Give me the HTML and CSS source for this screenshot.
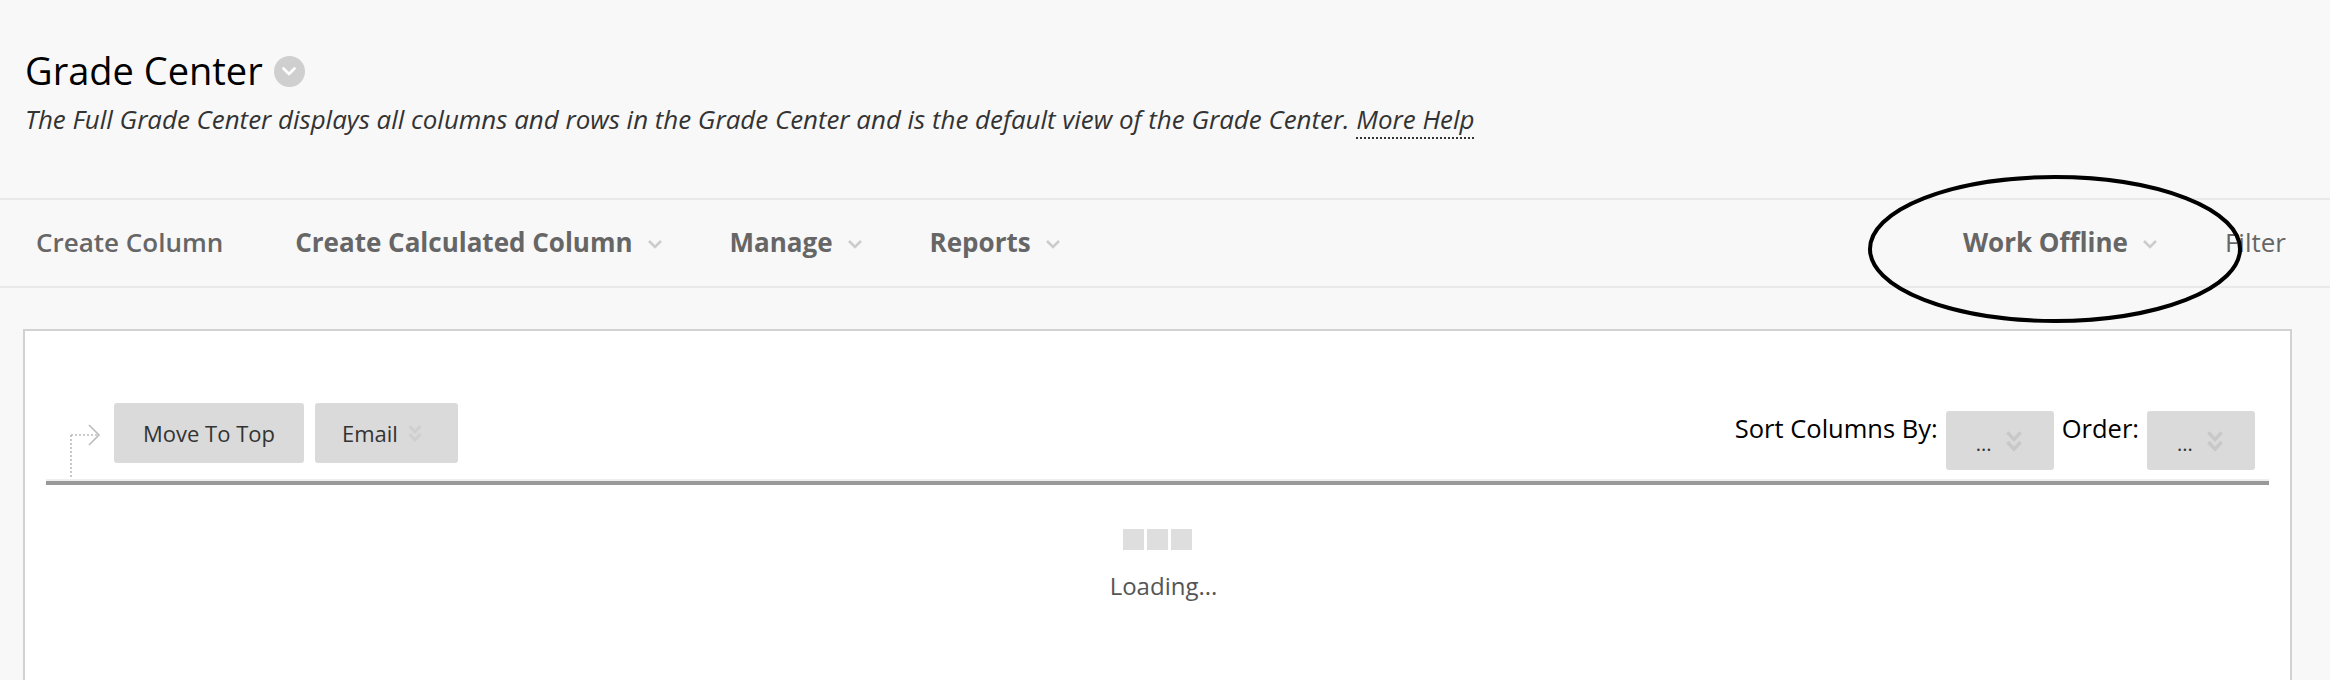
FILE: index.html
```html
<!DOCTYPE html>
<html lang="en">
<head>
<meta charset="utf-8">
<title>Grade Center</title>
<link rel="stylesheet" href="styles.css">
</head>
<body>
<header class="page-header">
  <div class="title-row">
    <h1 class="title">Grade Center</h1>
    <span class="title-menu">
      <svg width="14" height="9" viewBox="0 0 14 9"><polyline points="1.5,1.5 7,7 12.5,1.5" fill="none" stroke="#fff" stroke-width="2.6" stroke-linecap="round" stroke-linejoin="round"/></svg>
    </span>
  </div>
  <p class="desc">The Full Grade Center displays all columns and rows in the Grade Center and is the default view of the Grade Center. <a class="help" href="#">More Help</a></p>
</header>

<nav class="actionbar">
  <div class="nav-left">
    <span class="nav-item semi">Create Column</span>
    <span class="nav-item">Create Calculated Column<svg class="chev" viewBox="0 0 16 10"><polyline points="2,2 8,8 14,2" fill="none" stroke="#ccc" stroke-width="2.6"/></svg></span>
    <span class="nav-item">Manage<svg class="chev" viewBox="0 0 16 10"><polyline points="2,2 8,8 14,2" fill="none" stroke="#ccc" stroke-width="2.6"/></svg></span>
    <span class="nav-item">Reports<svg class="chev" viewBox="0 0 16 10"><polyline points="2,2 8,8 14,2" fill="none" stroke="#ccc" stroke-width="2.6"/></svg></span>
  </div>
  <div class="nav-right">
    <span class="nav-item">Work Offline<svg class="chev" viewBox="0 0 16 10"><polyline points="2,2 8,8 14,2" fill="none" stroke="#ccc" stroke-width="2.6"/></svg></span>
    <span class="nav-item plain">Filter</span>
  </div>
  <svg class="annotation" width="378" height="152" viewBox="0 0 378 152"><ellipse cx="189" cy="76" rx="185" ry="72" fill="none" stroke="#000" stroke-width="4"/></svg>
</nav>

<main class="content">
  <div class="toolbar">
    <div class="tool-left">
      <svg class="move-arrow" width="36" height="54" viewBox="0 0 36 54">
        <line x1="5" y1="11" x2="5" y2="54" stroke="#bbb" stroke-width="1.6" stroke-dasharray="2 2"/>
        <line x1="5" y1="11" x2="32" y2="11" stroke="#bbb" stroke-width="1.6" stroke-dasharray="2 2"/>
        <polyline points="23,1 33,11 23,21" fill="none" stroke="#bbb" stroke-width="1.6"/>
      </svg>
      <button class="btn">Move To Top</button>
      <button class="btn btn-menu">Email<svg class="dbl" viewBox="0 0 14 20"><polyline points="1.5,2 7,8 12.5,2" fill="none" stroke="#cfcfcf" stroke-width="3"/><polyline points="1.5,10 7,16 12.5,10" fill="none" stroke="#cfcfcf" stroke-width="3"/></svg></button>
    </div>
    <div class="tool-right">
      <span class="sort-label">Sort Columns By:</span>
      <span class="select"><span class="dots">...</span><svg class="dbl" viewBox="0 0 14 20"><polyline points="1.5,2 7,8 12.5,2" fill="none" stroke="#c8c8c8" stroke-width="2.8"/><polyline points="1.5,10 7,16 12.5,10" fill="none" stroke="#c8c8c8" stroke-width="2.8"/></svg></span>
      <span class="sort-label">Order:</span>
      <span class="select"><span class="dots">...</span><svg class="dbl" viewBox="0 0 14 20"><polyline points="1.5,2 7,8 12.5,2" fill="none" stroke="#c8c8c8" stroke-width="2.8"/><polyline points="1.5,10 7,16 12.5,10" fill="none" stroke="#c8c8c8" stroke-width="2.8"/></svg></span>
    </div>
  </div>
  <div class="bar"></div>
  <div class="loading">
    <div class="squares"><span></span><span></span><span></span></div>
    <div class="loading-text">Loading...</div>
  </div>
</main>
</body>
</html>
```

FILE: styles.css
```css
* { box-sizing: border-box; }

html, body {
  margin: 0;
  padding: 0;
  background: #f8f8f8;
  font-family: "Open Sans", "DejaVu Sans", sans-serif;
  overflow: hidden;
}

.page-header {
  padding: 46px 0 0 25px;
}

.title-row {
  display: flex;
  align-items: center;
  gap: 11px;
}

.title {
  margin: 0;
  font-size: 38px;
  line-height: 48px;
  font-weight: 400;
  color: #000;
}

.title-menu {
  width: 31px;
  height: 31px;
  border-radius: 50%;
  background: #cfcfcf;
  display: flex;
  align-items: center;
  justify-content: center;
  margin-top: 3px;
}

.desc {
  margin: 8px 0 0 0;
  font-size: 25.9px;
  line-height: 34px;
  font-style: italic;
  color: #333;
}

.help {
  color: #333;
  text-decoration: none;
  border-bottom: 2px dotted #333;
}

.actionbar {
  position: relative;
  margin-top: 62px;
  border-top: 2px solid #e9e9e9;
  border-bottom: 2px solid #e9e9e9;
  padding: 24px 44px 26px 36px;
  display: flex;
  justify-content: space-between;
}

.nav-left, .nav-right {
  display: flex;
  gap: 67px;
}

.nav-item {
  display: flex;
  align-items: center;
  font-size: 26px;
  line-height: 36px;
  font-weight: 700;
  color: #666;
}

.nav-item.semi { font-weight: 600; margin-right: 5px; }
.nav-item.plain { font-weight: 400; color: #666; }

.nav-right .nav-item:first-child { margin-right: 0; }

.chev {
  width: 16px;
  height: 10px;
  margin-left: 14px;
  margin-top: 3px;
}

.annotation {
  position: absolute;
  left: 1866px;
  top: -27px;
}

.content {
  margin: 41px 38px 0 23px;
  background: #fff;
  border: 2px solid #d2d2d2;
  padding: 72px 21px 120px 21px;
}

.toolbar {
  display: flex;
  justify-content: space-between;
  align-items: flex-start;
  height: 76px;
}

.tool-left {
  display: flex;
  align-items: flex-start;
}

.move-arrow {
  margin: 21px 12px 0 20px;
}

.btn {
  height: 60px;
  border: none;
  border-radius: 3px;
  background: #dadada;
  font-family: "Open Sans", sans-serif;
  font-size: 22px;
  color: #333;
  padding: 0 29px;
  display: flex;
  align-items: center;
  margin-right: 11px;
}

.btn-menu {
  padding: 0 36px 0 27px;
}

.dbl {
  width: 14px;
  height: 20px;
  margin-left: 10px;
  margin-top: 2px;
}

.tool-right {
  display: flex;
  align-items: flex-start;
  gap: 8px;
  margin-top: 8px;
  margin-right: 14px;
}

.sort-label {
  font-size: 25.5px;
  line-height: 34px;
  color: #000;
}

.select {
  width: 108px;
  height: 59px;
  border-radius: 3px;
  background: #dadada;
  display: flex;
  align-items: center;
  justify-content: center;
  gap: 12px;
}

.select .dots {
  font-size: 20px;
  color: #333;
  margin-top: 6px;
}

.select .dbl {
  width: 20px;
  height: 24px;
  margin-left: 0;
}

.bar {
  height: 6px;
  border-top: 2px solid #eeeeee;
  background: #999;
}

.loading {
  display: flex;
  flex-direction: column;
  align-items: center;
  padding-top: 44px;
}

.squares {
  display: flex;
  gap: 3px;
}

.squares span {
  width: 21px;
  height: 21px;
  background: #dedede;
}

.loading-text {
  margin: 19px 0 0 12px;
  font-size: 24px;
  color: #555;
}
```
